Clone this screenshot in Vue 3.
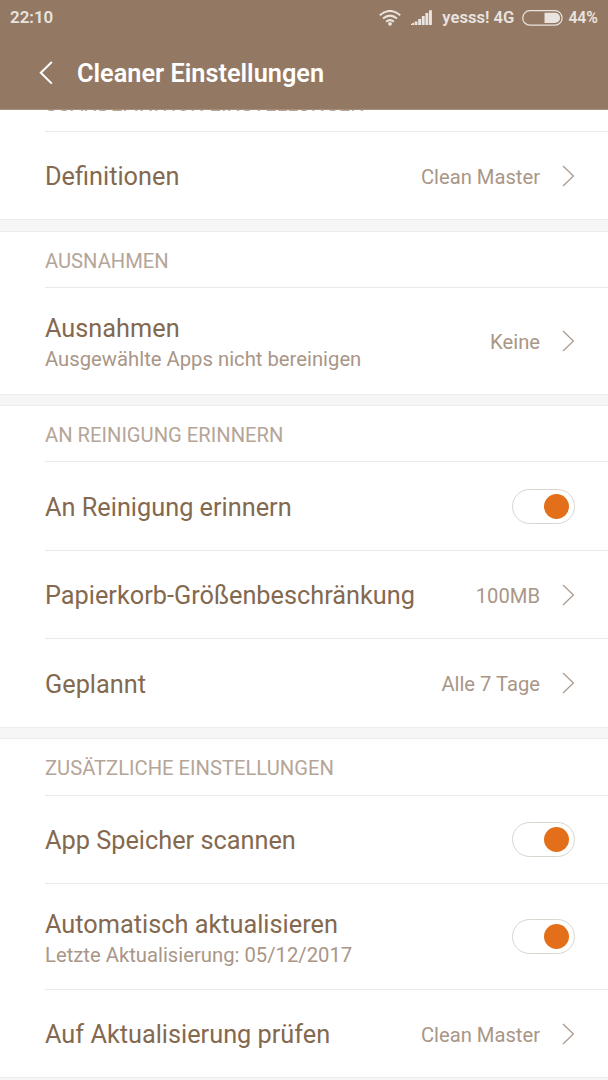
<script setup>
const sections = [
  {
    title: 'SCANDEFINITION EINSTELLUNGEN',
    clipped: true,
    head: 21,
    gap: 13,
    rows: [{ label: 'Definitionen', value: 'Clean Master', height: 88 }],
  },
  {
    title: 'AUSNAHMEN',
    head: 55,
    gap: 12,
    rows: [{ label: 'Ausnahmen', hint: 'Ausgewählte Apps nicht bereinigen', value: 'Keine', height: 107 }],
  },
  {
    title: 'AN REINIGUNG ERINNERN',
    head: 55,
    gap: 12,
    rows: [
      { label: 'An Reinigung erinnern', toggle: true, height: 89 },
      { label: 'Papierkorb-Größenbeschränkung', value: '100MB', height: 88 },
      { label: 'Geplannt', value: 'Alle 7 Tage', height: 89 },
    ],
  },
  {
    title: 'ZUSÄTZLICHE EINSTELLUNGEN',
    head: 56,
    gap: 12,
    rows: [
      { label: 'App Speicher scannen', toggle: true, height: 88 },
      { label: 'Automatisch aktualisieren', hint: 'Letzte Aktualisierung: 05/12/2017', toggle: true, height: 106 },
      { label: 'Auf Aktualisierung prüfen', value: 'Clean Master', height: 88 },
    ],
  },
]
</script>

<template>
  <div class="screen">
    <header class="top">
      <div class="status">
        <span class="time">22:10</span>
        <svg class="wifi" width="22" height="16" viewBox="0 0 22 16">
          <g fill="none" stroke="#e9e4e0" stroke-width="2">
            <path d="M0.8 5.2Q11-3.4 21.2 5.2" />
            <path d="M4 8.6Q11 2.6 18 8.6" />
            <path d="M7.1 11.8Q11 8.4 14.9 11.8" />
          </g>
          <circle cx="11" cy="13.8" r="1.9" fill="#e9e4e0" />
        </svg>
        <svg class="signal" width="21" height="15" viewBox="0 0 21 15">
          <path fill="#e9e4e0" d="M0 15V14L3 12.6V15ZM3.6 15V11.5H6.5V15ZM7.2 15V9H10.1V15ZM10.8 15V6H13.7V15ZM14.4 15V3H17.3V15ZM18 15V0.3H20.9V15Z" />
        </svg>
        <span class="carrier">yesss! 4G</span>
        <svg class="battery" width="41" height="16" viewBox="0 0 41 16">
          <rect x="0.7" y="0.7" width="39.4" height="14.4" rx="7.2" fill="none" stroke="#e9e4e0" stroke-width="1.2" />
          <path d="M22.5 2.8H33A5.1 5.1 0 0 1 33 13H22.5Z" fill="#e9e4e0" />
        </svg>
        <span class="percent">44%</span>
      </div>
      <div class="bar">
        <svg class="back" width="14" height="24" viewBox="0 0 14 24">
          <path d="M12.8 1L1.8 11.8L12.8 22.6" fill="none" stroke="#fff" stroke-width="2" />
        </svg>
        <h1>Cleaner Einstellungen</h1>
      </div>
    </header>
    <main>
      <section v-for="s in sections" :key="s.title">
        <h2 :class="{ clipped: s.clipped }" :style="{ height: s.head + 'px' }"><span>{{ s.title }}</span></h2>
        <div v-for="r in s.rows" :key="r.label" class="row" :style="{ height: r.height + 'px' }">
          <div class="texts" :class="{ double: r.hint }">
            <div class="label">{{ r.label }}</div>
            <div v-if="r.hint" class="hint">{{ r.hint }}</div>
          </div>
          <span v-if="r.value" class="value">{{ r.value }}</span>
          <svg v-if="r.value" class="chevron" width="13" height="22" viewBox="0 0 13 22">
            <path d="M1 1L11.4 11L1 21" fill="none" stroke="#ad9c8e" stroke-width="1.3" />
          </svg>
          <span v-if="r.toggle" class="toggle"><i></i></span>
        </div>
        <div class="gap" :style="{ height: s.gap + 'px' }"></div>
      </section>
    </main>
  </div>
</template>

<style>
body {
  background: #fff;
  overflow: hidden;
}
</style>

<style scoped>
.screen {
  width: 608px;
  height: 1080px;
  overflow: hidden;
  display: flex;
  flex-direction: column;
  background: #fff;
  font-family: Roboto, "Noto Sans", sans-serif;
}
.top {
  flex: none;
  height: 110px;
  background: #937963;
  border-bottom: 1px solid #a58e7c;
  box-sizing: border-box;
}
.status {
  display: flex;
  align-items: center;
  height: 35px;
  padding: 0 10px;
  color: #e9e4e0;
  font-size: 16.6px;
  font-weight: 600;
}
.time {
  margin-right: auto;
  padding-bottom: 2px;
  font-size: 16.9px;
}
.wifi { margin-right: 10px; }
.signal { margin-right: 10px; }
.battery { margin: 0 5px 0 8px; }
.percent { font-size: 15.75px; }
.bar {
  display: flex;
  align-items: center;
  height: 75px;
  padding-left: 39px;
}
h1 {
  margin: 0 0 0 24px;
  padding-top: 2px;
  color: #fff;
  font-size: 25.3px;
  font-weight: 600;
  line-height: 30px;
}
main { flex: none; }
.gap {
  box-sizing: border-box;
  background: #f6f6f6;
  border-top: 1px solid #ececec;
  border-bottom: 1px solid #ececec;
}
h2 {
  display: flex;
  align-items: center;
  box-sizing: border-box;
  margin: 0 0 0 45px;
  padding-top: 2px;
  color: #b5a598;
  font-size: 20.2px;
  font-weight: 400;
}
h2.clipped {
  align-items: flex-end;
  padding-top: 0;
  overflow: hidden;
}
h2.clipped span {
  line-height: 24px;
  margin-bottom: 15px;
}
.row {
  display: flex;
  align-items: center;
  box-sizing: border-box;
  margin-left: 45px;
  padding-right: 33px;
  border-top: 1px solid #e9e9e9;
}
.texts {
  flex: 1;
  padding-top: 3px;
}
.texts.double { padding-top: 5px; }
.label {
  color: #84694f;
  font-size: 25.3px;
  line-height: 32px;
  white-space: nowrap;
}
.hint {
  margin-top: -1px;
  color: #a99687;
  font-size: 20.25px;
  line-height: 30px;
}
.value {
  padding-top: 2px;
  color: #a99687;
  font-size: 20.2px;
  line-height: 26px;
}
.chevron { margin-left: 22px; }
.toggle {
  display: flex;
  align-items: center;
  justify-content: flex-end;
  box-sizing: border-box;
  width: 63px;
  height: 35px;
  padding-right: 5px;
  border: 1px solid #dbd5d0;
  border-radius: 18px;
}
.toggle i {
  width: 25px;
  height: 25px;
  border-radius: 50%;
  background: #e36f1a;
}
</style>
